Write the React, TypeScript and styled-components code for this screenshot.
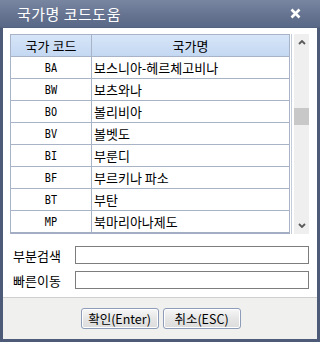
import styled, { createGlobalStyle } from 'styled-components';

const GlobalStyle = createGlobalStyle`
  html, body {
    margin: 0;
    padding: 0;
    background: #ffffff;
  }
  * {
    box-sizing: border-box;
  }
`;

const rows: { code: string; name: string }[] = [
  { code: 'BA', name: '보스니아-헤르체고비나' },
  { code: 'BW', name: '보츠와나' },
  { code: 'BO', name: '볼리비아' },
  { code: 'BV', name: '볼벳도' },
  { code: 'BI', name: '부룬디' },
  { code: 'BF', name: '부르키나 파소' },
  { code: 'BT', name: '부탄' },
  { code: 'MP', name: '북마리아나제도' },
];

const FONT = `"Noto Sans CJK KR", "Noto Sans", sans-serif`;

const Window = styled.div`
  width: 320px;
  height: 342px;
  display: flex;
  flex-direction: column;
  background: #4d5a78;
  padding: 0 3px 3px;
  font-family: ${FONT};
  color: #000;
`;

const TitleBar = styled.div`
  height: 28px;
  margin: 0 -3px;
  padding: 0 19px 0 17px;
  display: flex;
  align-items: center;
  justify-content: space-between;
  background: linear-gradient(#7886a2, #64728f 60%, #5a6888);
  border-bottom: 1px solid #55627f;

  h1 {
    margin: 0;
    color: #fff;
    font-size: 15px;
    font-weight: 400;
    letter-spacing: 0.5px;
  }
`;

const Body = styled.div`
  flex: 1;
  display: flex;
  flex-direction: column;
  background: #fff;
  padding: 6px 8px 0 7px;
`;

const GridArea = styled.div`
  display: flex;
  align-items: flex-start;
  gap: 1px;
`;

const TableFrame = styled.div`
  width: 283px;
  border-right: 1px solid #c6cdda;
  padding-right: 1px;
`;

const Table = styled.div`
  border: 1px solid #a9b3c8;
  border-bottom: 2px solid #a3adc3;
`;

const Row = styled.div<{ $head?: boolean }>`
  display: grid;
  grid-template-columns: 80px 1fr;
  height: 22px;
  border-bottom: 1px solid #a9b3c8;
  background: ${({ $head }) => ($head ? 'linear-gradient(#d6e5f8, #c4d8f2)' : '#fff')};

  &:last-child {
    border-bottom: 0;
    height: 21px;
  }
`;

const Cell = styled.div<{ $center?: boolean; $mono?: boolean }>`
  display: flex;
  align-items: center;
  justify-content: ${({ $center }) => ($center ? 'center' : 'flex-start')};
  padding-left: ${({ $center }) => ($center ? '0' : '2px')};
  font-size: 13px;
  line-height: 1;
  white-space: nowrap;
  overflow: hidden;
  font-family: ${({ $mono }) => ($mono ? `"DejaVu Sans Mono", ${FONT}` : FONT)};
  ${({ $mono }) => ($mono ? 'font-size: 12px; transform: scaleX(0.85);' : '')}

  & + & {
    border-left: 1px solid #a9b3c8;
  }
`;

const Scrollbar = styled.div`
  width: 15px;
  height: 200px;
  margin-left: 1px;
  background: #efefef;
  display: flex;
  flex-direction: column;
  align-items: center;
  justify-content: space-between;
  padding: 6px 0 6px;
  position: relative;
`;

const Thumb = styled.div`
  position: absolute;
  left: 0;
  top: 74px;
  width: 15px;
  height: 17px;
  background: #c8c8c8;
`;

const Form = styled.div`
  display: grid;
  grid-template-columns: 62px 1fr;
  row-gap: 7px;
  align-items: center;
  margin-top: 12px;
  padding-left: 3px;
`;

const Label = styled.label`
  font-size: 13px;
  line-height: 1;
`;

const Input = styled.input`
  height: 18px;
  width: 100%;
  border: 1px solid #7d7d7d;
  background: #fff;
  outline: none;
`;

const Footer = styled.div`
  height: 42px;
  background: #f0f0ef;
  border-top: 1px solid #cfcfcf;
  display: flex;
  align-items: center;
  justify-content: center;
  gap: 4px;
  padding-left: 1px;
`;

const Button = styled.button<{ $w: number }>`
  width: ${({ $w }) => $w}px;
  height: 21px;
  padding: 0;
  border: 1px solid #8d9cb8;
  border-radius: 3px;
  background: linear-gradient(#f7f7f7, #e6e6e6 50%, #dcdcdc);
  font-family: ${FONT};
  font-size: 12.5px;
  color: #000;
  box-shadow: inset 0 0 0 1px #ffffff;
`;

function Chevron({ down }: { down?: boolean }) {
  return (
    <svg width="8" height="5" viewBox="0 0 8 5">
      <path
        d={down ? 'M1 1 L4 4 L7 1' : 'M1 4 L4 1 L7 4'}
        fill="none"
        stroke="#5a5a5a"
        strokeWidth="1.8"
      />
    </svg>
  );
}

export default function App() {
  return (
    <>
      <GlobalStyle />
      <Window>
        <TitleBar>
          <h1>국가명 코드도움</h1>
          <svg width="11" height="11" viewBox="0 0 11 11">
            <path d="M1.5 1.5 L9.5 9.5 M9.5 1.5 L1.5 9.5" stroke="#fff" strokeWidth="2.6" />
          </svg>
        </TitleBar>
        <Body>
          <GridArea>
            <TableFrame>
              <Table>
                <Row $head>
                  <Cell $center>국가 코드</Cell>
                  <Cell $center>국가명</Cell>
                </Row>
                {rows.map((r) => (
                  <Row key={r.code}>
                    <Cell $center $mono>
                      {r.code}
                    </Cell>
                    <Cell>{r.name}</Cell>
                  </Row>
                ))}
              </Table>
            </TableFrame>
            <Scrollbar>
              <Chevron />
              <Thumb />
              <Chevron down />
            </Scrollbar>
          </GridArea>
          <Form>
            <Label>부분검색</Label>
            <Input />
            <Label>빠른이동</Label>
            <Input />
          </Form>
        </Body>
        <Footer>
          <Button $w={78}>확인(Enter)</Button>
          <Button $w={78}>취소(ESC)</Button>
        </Footer>
      </Window>
    </>
  );
}
